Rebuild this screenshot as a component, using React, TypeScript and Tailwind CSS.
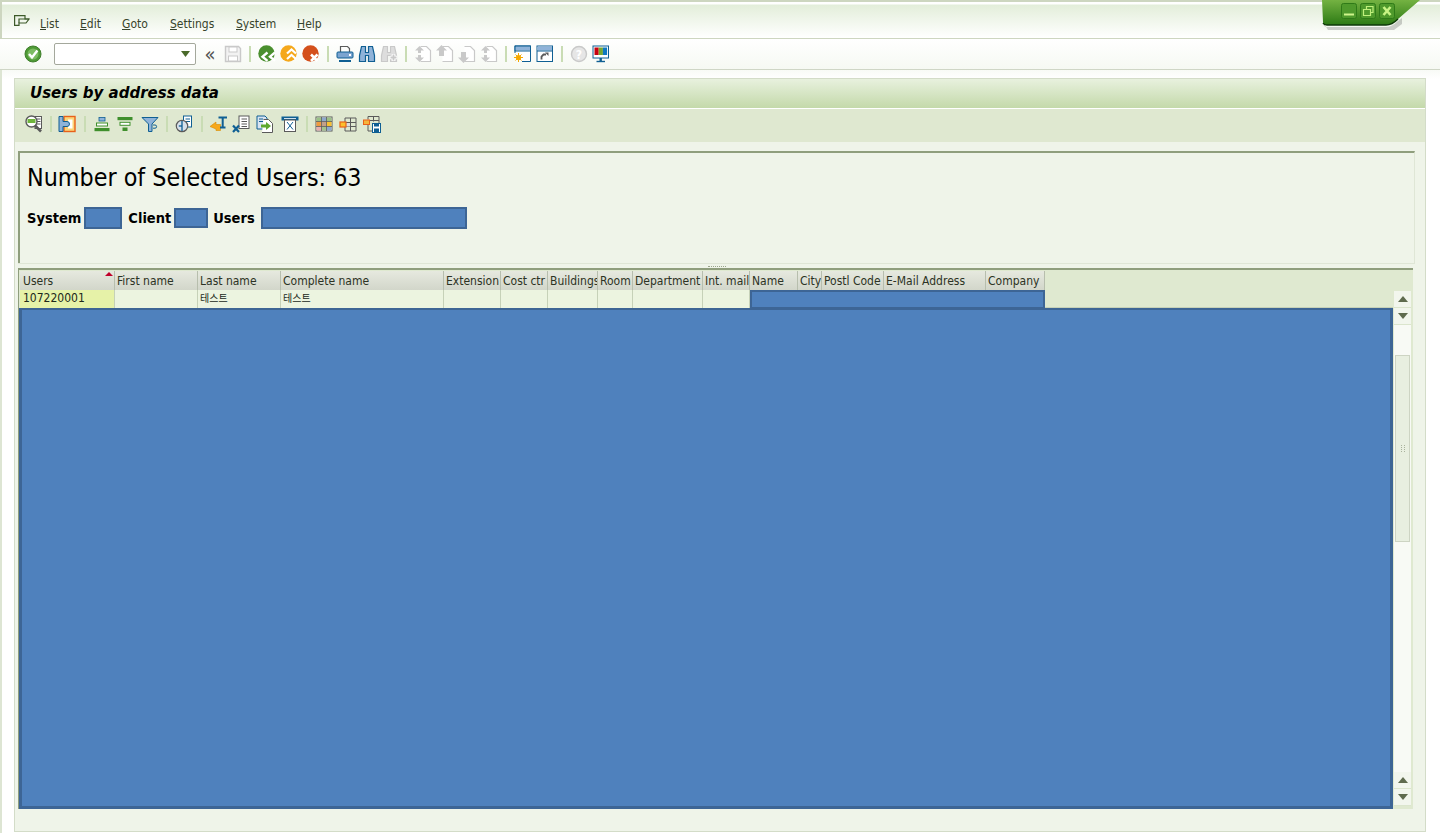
import React from "react";

const font = { fontFamily: '"DejaVu Sans Condensed", "Noto Sans", Tahoma, sans-serif' };
const B = "#0f5f93";
const L = "#8fb3d9";
const G = "#c9c9c9";
const D = "#5a5a5a";

function I({ children }: { children: React.ReactNode }) {
  return (
    <svg width="18" height="18" viewBox="0 0 18 18" fill="none">
      {children}
    </svg>
  );
}

function Sep({ className = "w-3" }: { className?: string }) {
  return (
    <div className={`flex justify-center ${className}`}>
      <div className="h-[16px] w-[2px] bg-[#c9dcb4]" />
    </div>
  );
}

function Btn({ children, className = "" }: { children: React.ReactNode; className?: string }) {
  return <div className={`flex h-[22px] w-[22px] shrink-0 items-center justify-center ${className}`}>{children}</div>;
}

const Page = ({ c = G }: { c?: string }) => (
  <path d="M6.5 1.5h6l4 4v11h-10" stroke={c} strokeWidth="1.2" fill="#fff" />
);

const icons = {
  ok: (
    <I>
      <circle cx="9" cy="9" r="8" fill="#4e9a35" stroke="#3f7f2c" />
      <circle cx="9" cy="9" r="5.5" fill="#7cbb62" />
      <path d="M5 9l3 3.4L13.4 5.4" stroke="#fff" strokeWidth="2.4" />
    </I>
  ),
  save: (
    <I>
      <path d="M1.5 1.5h13l2 2v13h-15z" fill="#f2f2f2" stroke={G} strokeWidth="1.4" />
      <rect x="5" y="2" width="8" height="5" fill="#fff" stroke={G} />
      <rect x="4.5" y="11" width="9" height="5" fill="#fff" stroke={G} />
    </I>
  ),
  back: (
    <I>
      <circle cx="8.5" cy="8.5" r="8.2" fill="#4a8f2e" />
      <path d="M9.5 7.5l-5 4.2 5 4.2M17 7.5l-5 4.2 5 4.2" stroke="#fff" strokeWidth="2.4" />
    </I>
  ),
  exit: (
    <I>
      <circle cx="8.5" cy="8.5" r="8.2" fill="#f5a81c" />
      <path d="M7 8.5l4.5-4 4.5 4M7 14l4.5-4 4.5 4" stroke="#fff" strokeWidth="2.2" />
    </I>
  ),
  cancel: (
    <I>
      <circle cx="8.5" cy="8.5" r="8.2" fill="#d4501c" />
      <path d="M9 9.5l6.5 6.5M15.5 9.5L9 16" stroke="#fff" strokeWidth="2.6" />
    </I>
  ),
  print: (
    <I>
      <path d="M4.5 7V1.5h7l2 2V7" stroke={D} strokeWidth="1.2" />
      <rect x="1" y="7" width="16" height="6" rx="1" fill="#7ba4d0" stroke={B} />
      <rect x="13" y="9" width="2" height="2" fill="#fff" />
      <rect x="3" y="15" width="12" height="2" fill={B} />
    </I>
  ),
  find: (
    <I>
      <path d="M3.5 1.5h4v6h3v-6h4l2 9v6h-6v-6h-3v6h-6v-6z" fill={L} stroke={B} strokeWidth="1.2" />
    </I>
  ),
  findNext: (
    <I>
      <path d="M3.5 1.5h4v6h3v-6h4l2 9v6h-6v-6h-3v6h-6v-6z" fill="#ddd" stroke={G} strokeWidth="1.2" />
      <path d="M13.5 9v7M10 12.5h7" stroke="#fff" strokeWidth="3.4" />
      <path d="M13.5 9.5v6M10.5 12.5h6" stroke={G} strokeWidth="1.8" />
    </I>
  ),
  first: (
    <I>
      <Page />
      <path d="M5.5 1L1 5.5h3V8h3V5.5h3zM5.5 17L1 12.5h3V10h3v2.5h3z" fill={G} />
    </I>
  ),
  prev: (
    <I>
      <Page />
      <path d="M5.5 0L0 5.5h3V11h5V5.5h3z" fill={G} />
    </I>
  ),
  next: (
    <I>
      <Page />
      <path d="M5.5 18L0 12.5h3V7h5v5.5h3z" fill={G} />
    </I>
  ),
  last: (
    <I>
      <Page />
      <path d="M5.5 1L1 5.5h3V8h3V5.5h3zM5.5 17L1 12.5h3V10h3v2.5h3z" fill={G} />
    </I>
  ),
  newS: (
    <I>
      <path d="M8 16.5h8.5V1H1v7" fill="#fff" stroke={B} />
      <rect x="1.5" y="1.5" width="14.5" height="4" fill={L} />
      <rect x="1" y="1" width="15.5" height="5" stroke={B} />
      <circle cx="4.5" cy="12.5" r="2.6" fill="#f6a800" />
      <path d="M4.5 8v9M0 12.5h9M1.5 9.5l6 6M7.5 9.5l-6 6" stroke="#f6a800" strokeWidth="1" />
    </I>
  ),
  shortcut: (
    <I>
      <rect x="1" y="1" width="15.5" height="15.5" fill="#fff" stroke={B} />
      <rect x="1.5" y="1.5" width="14.5" height="4" fill={L} />
      <path d="M1 6h15.5" stroke={B} />
      <path d="M5.5 14.5v-3l2-2H10" stroke={D} strokeWidth="1.8" />
      <path d="M9 7.5h3.5V11z" fill={D} />
    </I>
  ),
  help: (
    <I>
      <circle cx="9" cy="9" r="7.5" fill="#e6e6e6" stroke={G} strokeWidth="1.4" />
      <text x="9" y="13.5" textAnchor="middle" fontSize="12" fontWeight="700" fill="#fff" style={font}>
        ?
      </text>
    </I>
  ),
  monitor: (
    <I>
      <rect x="1" y="1" width="15.5" height="12" fill="#fff" stroke={B} />
      <rect x="2.5" y="2.5" width="4.2" height="7.5" fill="#c8000f" />
      <rect x="6.7" y="2.5" width="4.2" height="7.5" fill="#78a830" />
      <rect x="10.9" y="2.5" width="4.2" height="7.5" fill="#1078c0" />
      <path d="M8.7 13v3" stroke={B} strokeWidth="2.4" />
      <path d="M4.5 16.5h8.5" stroke={B} strokeWidth="1.4" />
    </I>
  ),
  detail: (
    <I>
      <rect x="10" y="1.5" width="6.5" height="12" fill="#fff" stroke={D} />
      <path d="M12 4h3.5M12 6.5h3.5M12 9h3.5" stroke={D} />
      <circle cx="6.5" cy="6.5" r="5.5" fill="#fff" stroke={D} strokeWidth="1.4" />
      <rect x="2.5" y="4" width="8" height="4" fill="#6eb43c" />
      <path d="M10 10.5l6 6" stroke={D} strokeWidth="2.6" />
    </I>
  ),
  layout: (
    <I>
      <rect x="6" y="1.5" width="11" height="15" fill="#fbd479" stroke="#e8611a" strokeWidth="1.4" />
      <rect x="10" y="4.5" width="4.5" height="9" fill="#fff" />
      <path d="M1 1.5h4v5h4a2.5 2.5 0 0 1 0 5H5v5H1z" fill={L} stroke={B} />
    </I>
  ),
  asc: (
    <I>
      <rect x="6" y="2.5" width="6" height="3.5" fill={L} stroke={B} strokeWidth=".8" />
      <rect x="3.5" y="8" width="11" height="3" fill="#fff" stroke="#3f8f2c" strokeWidth="1" />
      <rect x="1.5" y="13" width="15" height="3.2" fill="#3f8f2c" />
    </I>
  ),
  desc: (
    <I>
      <rect x="1.5" y="2" width="15" height="3.2" fill="#3f8f2c" />
      <rect x="4" y="7.3" width="10" height="3" fill="#fff" stroke="#3f8f2c" strokeWidth="1" />
      <rect x="6.5" y="12.5" width="5" height="3.5" fill="#3f8f2c" />
    </I>
  ),
  filter: (
    <I>
      <path d="M1 2.5h16l-6 6.5v7.5H7.5V9z" fill={L} stroke={B} />
      <path d="M12 10h2a1.6 1.6 0 0 1 0 3.2h-2" stroke={B} />
    </I>
  ),
  time: (
    <I>
      <rect x="8.5" y="1" width="8" height="11" fill="#fff" stroke={B} />
      <path d="M10.5 4h4.5M10.5 6.5h4.5" stroke={B} />
      <circle cx="7" cy="11" r="5.7" fill="#d7e0ea" stroke={D} strokeWidth="1.2" />
      <path d="M7 6v10" stroke={B} strokeWidth="1.3" />
      <path d="M7 11H3.8" stroke={B} strokeWidth="1.3" />
    </I>
  ),
  abc: (
    <I>
      <path d="M0 11.5l6-4.5v2.5h4.5v6H6V14z" fill="#f7a81b" stroke="#d98b00" strokeWidth=".6" />
      <path d="M8.5 2.5h8.5M12.7 2.5v10M10 12.5h5.5" stroke={B} strokeWidth="2" />
    </I>
  ),
  excel: (
    <I>
      <rect x="7" y="1" width="10" height="12.5" fill="#fff" stroke={D} />
      <path d="M9.5 4h5.5M9.5 6.5h5.5M9.5 9h5.5M9.5 11.5h5.5" stroke={D} strokeWidth="1" />
      <path d="M1 10.5l6 6.5M7 10.5L1 17" stroke={B} strokeWidth="2.2" />
    </I>
  ),
  export: (
    <I>
      <path d="M1 1h8l2 2v11H1z" fill="#d8e4f2" stroke={B} />
      <path d="M3 4h4M3 6.5h4" stroke={B} />
      <path d="M7.5 4.5h5l4 4v9H6" stroke={D} fill="#fff" />
      <path d="M5 9.5h5V7l5 4-5 4v-2.5H5z" fill="#5da82e" />
    </I>
  ),
  word: (
    <I>
      <rect x=".5" y="1.5" width="17" height="4" fill={B} />
      <rect x="3.5" y="5" width="11" height="11.5" fill="#fff" stroke={D} />
      <path d="M6 7l6 7.5M12 7l-6 7.5" stroke={B} strokeWidth="1" />
      <rect x="3" y="3" width="12" height="1" fill="#cfe0ef" />
    </I>
  ),
  table: (
    <I>
      <rect x="1" y="2" width="16" height="14" fill="#fff" stroke={D} />
      <rect x="1.5" y="2.5" width="5" height="4" fill="#9bc187" />
      <rect x="6.5" y="2.5" width="5" height="4" fill="#8da9cc" />
      <rect x="11.5" y="2.5" width="5" height="4" fill="#9bc187" />
      <rect x="1.5" y="6.5" width="5" height="5" fill="#f09a3e" />
      <rect x="6.5" y="6.5" width="5" height="5" fill="#c2a08a" />
      <rect x="11.5" y="6.5" width="5" height="5" fill="#f8c030" />
      <rect x="1.5" y="11.5" width="5" height="4" fill="#e8b0b0" />
      <rect x="6.5" y="11.5" width="5" height="4" fill="#a4c48c" />
      <rect x="11.5" y="11.5" width="5" height="4" fill="#8da9cc" />
      <path d="M6.5 2v14M11.5 2v14M1 6.5h16M1 11.5h16" stroke={D} strokeWidth=".8" />
    </I>
  ),
  tableSel: (
    <I>
      <path d="M6 3h11v13H6M11.5 3v13M6 7.5h11M6 11.5h11M6 3v4M6 12v4" stroke={D} strokeWidth="1" />
      <rect x="6.5" y="8" width="4.5" height="3.5" fill="#ddd" />
      <rect x="1" y="7" width="6" height="5" fill="#fbc02d" stroke="#e8611a" strokeWidth="1.2" />
    </I>
  ),
  tableSave: (
    <I>
      <path d="M5 1.5h11v11M10.5 1.5v5M5 5.5h11M5 1.5v3M5 9v7h4" stroke={D} strokeWidth="1" />
      <rect x=".5" y="5" width="6" height="4.5" fill="#f6b53a" stroke="#e8611a" />
      <rect x="9.5" y="8.5" width="8" height="9" fill="#fff" stroke={B} />
      <rect x="11" y="8.5" width="5" height="3" fill={B} />
      <rect x="11" y="13.5" width="5" height="3.5" fill={B} />
    </I>
  ),
};

const menus = [
  ["L", "ist", "w-[40px]"],
  ["E", "dit", "w-[42px]"],
  ["G", "oto", "w-[48px]"],
  ["S", "ettings", "w-[66px]"],
  ["S", "ystem", "w-[61px]"],
  ["H", "elp", "w-[40px]"],
];

const cols: [string, number][] = [
  ["Users", 95],
  ["First name", 83],
  ["Last name", 83],
  ["Complete name", 163],
  ["Extension", 57],
  ["Cost ctr", 47],
  ["Buildings", 50],
  ["Room", 35],
  ["Department", 70],
  ["Int. mail", 47],
  ["Name", 48],
  ["City", 24],
  ["Postl Code", 62],
  ["E-Mail Address", 102],
  ["Company", 59],
];

function Arrow({ up }: { up?: boolean }) {
  return (
    <div className="flex h-[17px] items-center justify-center border-b border-[#dbe5cd] bg-[#f2f6ed]">
      <svg width="10" height="6" viewBox="0 0 10 6">
        <path d={up ? "M5 0l5 6H0z" : "M5 6L0 0h10z"} fill="#5f6b4e" />
      </svg>
    </div>
  );
}

function Redact({ className }: { className: string }) {
  return <div className={`border-2 border-[#3d6595] bg-[#4f81bd] ${className}`} />;
}

export default function App() {
  return (
    <div style={font} className="relative flex h-[833px] w-[1440px] flex-col overflow-hidden bg-white text-black">
      {/* menu bar */}
      <div className="flex h-[39px] shrink-0 border-b border-l-2 border-t-2 border-[#cdd6c0] bg-[linear-gradient(#fff_0,#fff_2px,#e3eeda_3px,#fff_100%)] pl-[12px] pt-[11px]">
        <svg width="16" height="11" viewBox="0 0 16 11" fill="none" className="mt-[2px]">
          <path d="M.6.6H11V4h4l-3 4H5v2.4H.6z" stroke="#3d5a2a" strokeWidth="1.2" />
          <path d="M5 8V4h10" stroke="#3d5a2a" strokeWidth="1.2" />
        </svg>
        <div className="ml-[10px] mt-[3px] flex text-[12px] leading-[16px] text-[#38442c]">
          {menus.map(([a, b, w]) => (
            <div key={a + b} className={w}>
              <span className="underline">{a}</span>
              {b}
            </div>
          ))}
        </div>
      </div>

      {/* system toolbar */}
      <div className="flex h-[31px] shrink-0 items-center border-b border-[#cfd6c6] bg-gradient-to-b from-white to-[#f6f9f3] pl-[22px]">
        <Btn>{icons.ok}</Btn>
        <div className="ml-[10px] flex h-[22px] w-[142px] items-center justify-end rounded-[2px] border border-[#a4a89c] bg-white pr-[5px]">
          <svg width="9" height="6" viewBox="0 0 9 6">
            <path d="M0 0h9L4.5 6z" fill="#4a6a2a" />
          </svg>
        </div>
        <div className="w-[28px] text-center text-[20px] leading-[22px] text-[#555]">«</div>
        <div className="-ml-[2px]">
          <Btn>{icons.save}</Btn>
        </div>
        <Sep />
        <Btn>{icons.back}</Btn>
        <Btn>{icons.exit}</Btn>
        <Btn>{icons.cancel}</Btn>
        <Sep />
        <Btn>{icons.print}</Btn>
        <Btn>{icons.find}</Btn>
        <Btn>{icons.findNext}</Btn>
        <Sep />
        <Btn>{icons.first}</Btn>
        <Btn>{icons.prev}</Btn>
        <Btn>{icons.next}</Btn>
        <Btn>{icons.last}</Btn>
        <Sep />
        <Btn>{icons.newS}</Btn>
        <Btn>{icons.shortcut}</Btn>
        <Sep />
        <Btn>{icons.help}</Btn>
        <Btn>{icons.monitor}</Btn>
      </div>

      {/* body */}
      <div className="flex min-h-0 flex-1 flex-col border-l-2 border-[#dde5d3] bg-gradient-to-b from-[#f8faf6] to-white to-[9px] pl-[12px] pr-[14px] pt-[8px]">
        <div className="mb-px flex min-h-0 flex-1 flex-col border border-[#d3dcc8] bg-[#eff4e9]">
          <div
            style={{ fontFamily: '"DejaVu Sans", sans-serif' }}
            className="flex h-[30px] shrink-0 items-center border-b border-white bg-gradient-to-b from-[#e8f1de] to-[#c4d9aa] pb-px pl-[15px] text-[15px] font-bold italic text-black"
          >
            Users by address data
          </div>
          <div className="flex h-[33px] shrink-0 items-center bg-[#dfe8d0] pb-[3px] pl-[8px]">
            <Btn>{icons.detail}</Btn>
            <Sep className="w-[11px]" />
            <Btn>{icons.layout}</Btn>
            <Sep className="w-[13px]" />
            <Btn>{icons.asc}</Btn>
            <Btn className="ml-px">{icons.desc}</Btn>
            <Btn className="ml-[3px]">{icons.filter}</Btn>
            <Sep />
            <Btn>{icons.time}</Btn>
            <Sep className="w-[13px]" />
            <Btn>{icons.abc}</Btn>
            <Btn>{icons.excel}</Btn>
            <Btn className="ml-[2px]">{icons.export}</Btn>
            <Btn className="ml-[3px]">{icons.word}</Btn>
            <Sep />
            <Btn>{icons.table}</Btn>
            <Btn className="ml-[2px]">{icons.tableSel}</Btn>
            <Btn className="ml-[2px]">{icons.tableSave}</Btn>
          </div>

          {/* header panel */}
          <div className="ml-[3px] mr-[10px] mt-[9px] h-[112px] shrink-0 border-l-2 border-r border-t-2 border-l-[#8f9e7d] border-r-[#dfe6d6] border-t-[#8f9e7d] bg-[#eff4e9] pl-[7px]">
            <div className="mt-[9px] text-[24.8px] leading-[32px]">Number of Selected Users: 63</div>
            <div className="mt-[13px] flex items-center text-[14.5px] font-bold leading-[22px]">
              <span>System</span>
              <Redact className="ml-[3px] h-[22px] w-[38px]" />
              <span className="ml-[6px]">Client</span>
              <Redact className="ml-[3px] h-[20px] w-[34px]" />
              <span className="ml-[5px]">Users</span>
              <Redact className="ml-[6px] h-[22px] w-[206px]" />
            </div>
          </div>

          {/* splitter */}
          <div className="ml-[3px] mr-[10px] flex h-[5px] shrink-0 items-center justify-center border-t border-[#dfe6d6]">
            <div className="h-px w-[18px] border-t border-dotted border-[#9aa58c]" />
          </div>

          {/* grid */}
          <div className="mb-[22px] ml-[3px] mr-[12px] flex min-h-0 flex-1 border-l border-t-2 border-[#8f9e7d] bg-[#dfe9d0]">
            <div className="flex w-[1374px] shrink-0 flex-col">
              <div className="flex h-[20px] shrink-0 pl-px pt-px">
                {cols.map(([name, w], i) => (
                  <div
                    key={name}
                    style={{ width: w }}
                    className={`relative shrink-0 overflow-hidden whitespace-nowrap border-r border-[#b7bead] bg-gradient-to-b from-[#e6e9df] to-[#d2d6ca] text-[12px] leading-[20px] text-[#2c3324] ${
                      i === 0 ? "pl-[3px]" : "pl-[2px]"
                    }`}
                  >
                    {name}
                    {i === 0 && (
                      <svg width="8" height="4" viewBox="0 0 8 4" className="absolute right-[1px] top-[1px]">
                        <path d="M4 0l4 4H0z" fill="#c0002a" />
                      </svg>
                    )}
                  </div>
                ))}
              </div>
              <div className="flex h-[18px] shrink-0 pl-px">
                {cols.slice(0, 10).map(([name, w], i) => (
                  <div
                    key={name}
                    style={{ width: w }}
                    className={`shrink-0 overflow-hidden whitespace-nowrap border-r border-[#c6d1b8] text-[12px] leading-[16px] text-[#20281a] ${
                      i === 0 ? "bg-[#e6f2a8] pl-[3px]" : "bg-[#ecf4e0] pl-[2px]"
                    }`}
                  >
                    {i === 0 && "107220001"}
                    {(i === 2 || i === 3) && (
                      <span className="text-[10px]" style={{ fontFamily: '"Noto Sans CJK KR", sans-serif' }}>
                        테스트
                      </span>
                    )}
                  </div>
                ))}
                <Redact className="h-[19px] w-[295px] shrink-0" />
                <div className="flex-1 border-b border-[#c6d1b8]" />
              </div>
              <div className="min-h-0 flex-1">
                <div className="h-[501px] w-[1374px] border-[3px] border-t-2 border-[#3d6595] bg-[#4f81bd]" />
              </div>
            </div>
            <div className="ml-px mt-[21px] flex w-[17px] shrink-0 flex-col self-start">
              <Arrow up />
              <Arrow />
              <div className="flex h-[447px] flex-col bg-[#f8faf5] pt-[30px]">
                <div className="mx-px flex h-[187px] items-center justify-center border border-[#cdd4c3] bg-[#e8efe0]">
                  <div className="h-[7px] w-[4px] border-x border-dotted border-[#a9b29c]" />
                </div>
              </div>
              <Arrow up />
              <Arrow />
            </div>
          </div>
        </div>
      </div>

      {/* window controls (over the menu bar) */}
      <svg width="106" height="32" viewBox="0 0 106 32" fill="none" className="absolute left-[1320px] top-0">
        <defs>
          <linearGradient id="wg" x1="0" y1="0" x2="0" y2="1">
            <stop offset="0" stopColor="#74b242" />
            <stop offset="1" stopColor="#2c7a14" />
          </linearGradient>
        </defs>
        <path d="M3 22q0 5 4 5h59q6 0 12-6l4-3v6l-8 6H8z" fill="#000" opacity=".18" />
        <path d="M2 0l1 22q0 3 4 3h59q6 0 12-6L100 0z" fill="url(#wg)" />
        <path d="M3 23q1 2 4 2h59q6 0 12-6" stroke="#0e3a08" strokeWidth="1.4" />
        <g stroke="#2f7a18" fill="#4f9a2c">
          <rect x="21.5" y="3.5" width="15" height="15" rx="2" />
          <rect x="40.5" y="3.5" width="15" height="15" rx="2" />
          <rect x="59.5" y="3.5" width="15" height="15" rx="2" />
        </g>
        <path d="M24 14.5h10" stroke="#d0f58c" strokeWidth="2" />
        <path d="M43.5 9.5h7v6h-7zM46.5 9V6.5h6.5v6h-2" stroke="#c0f07c" strokeWidth="1.2" />
        <path d="M63.5 7l7 8M70.5 7l-7 8" stroke="#c8f484" strokeWidth="2.6" />
      </svg>
    </div>
  );
}
